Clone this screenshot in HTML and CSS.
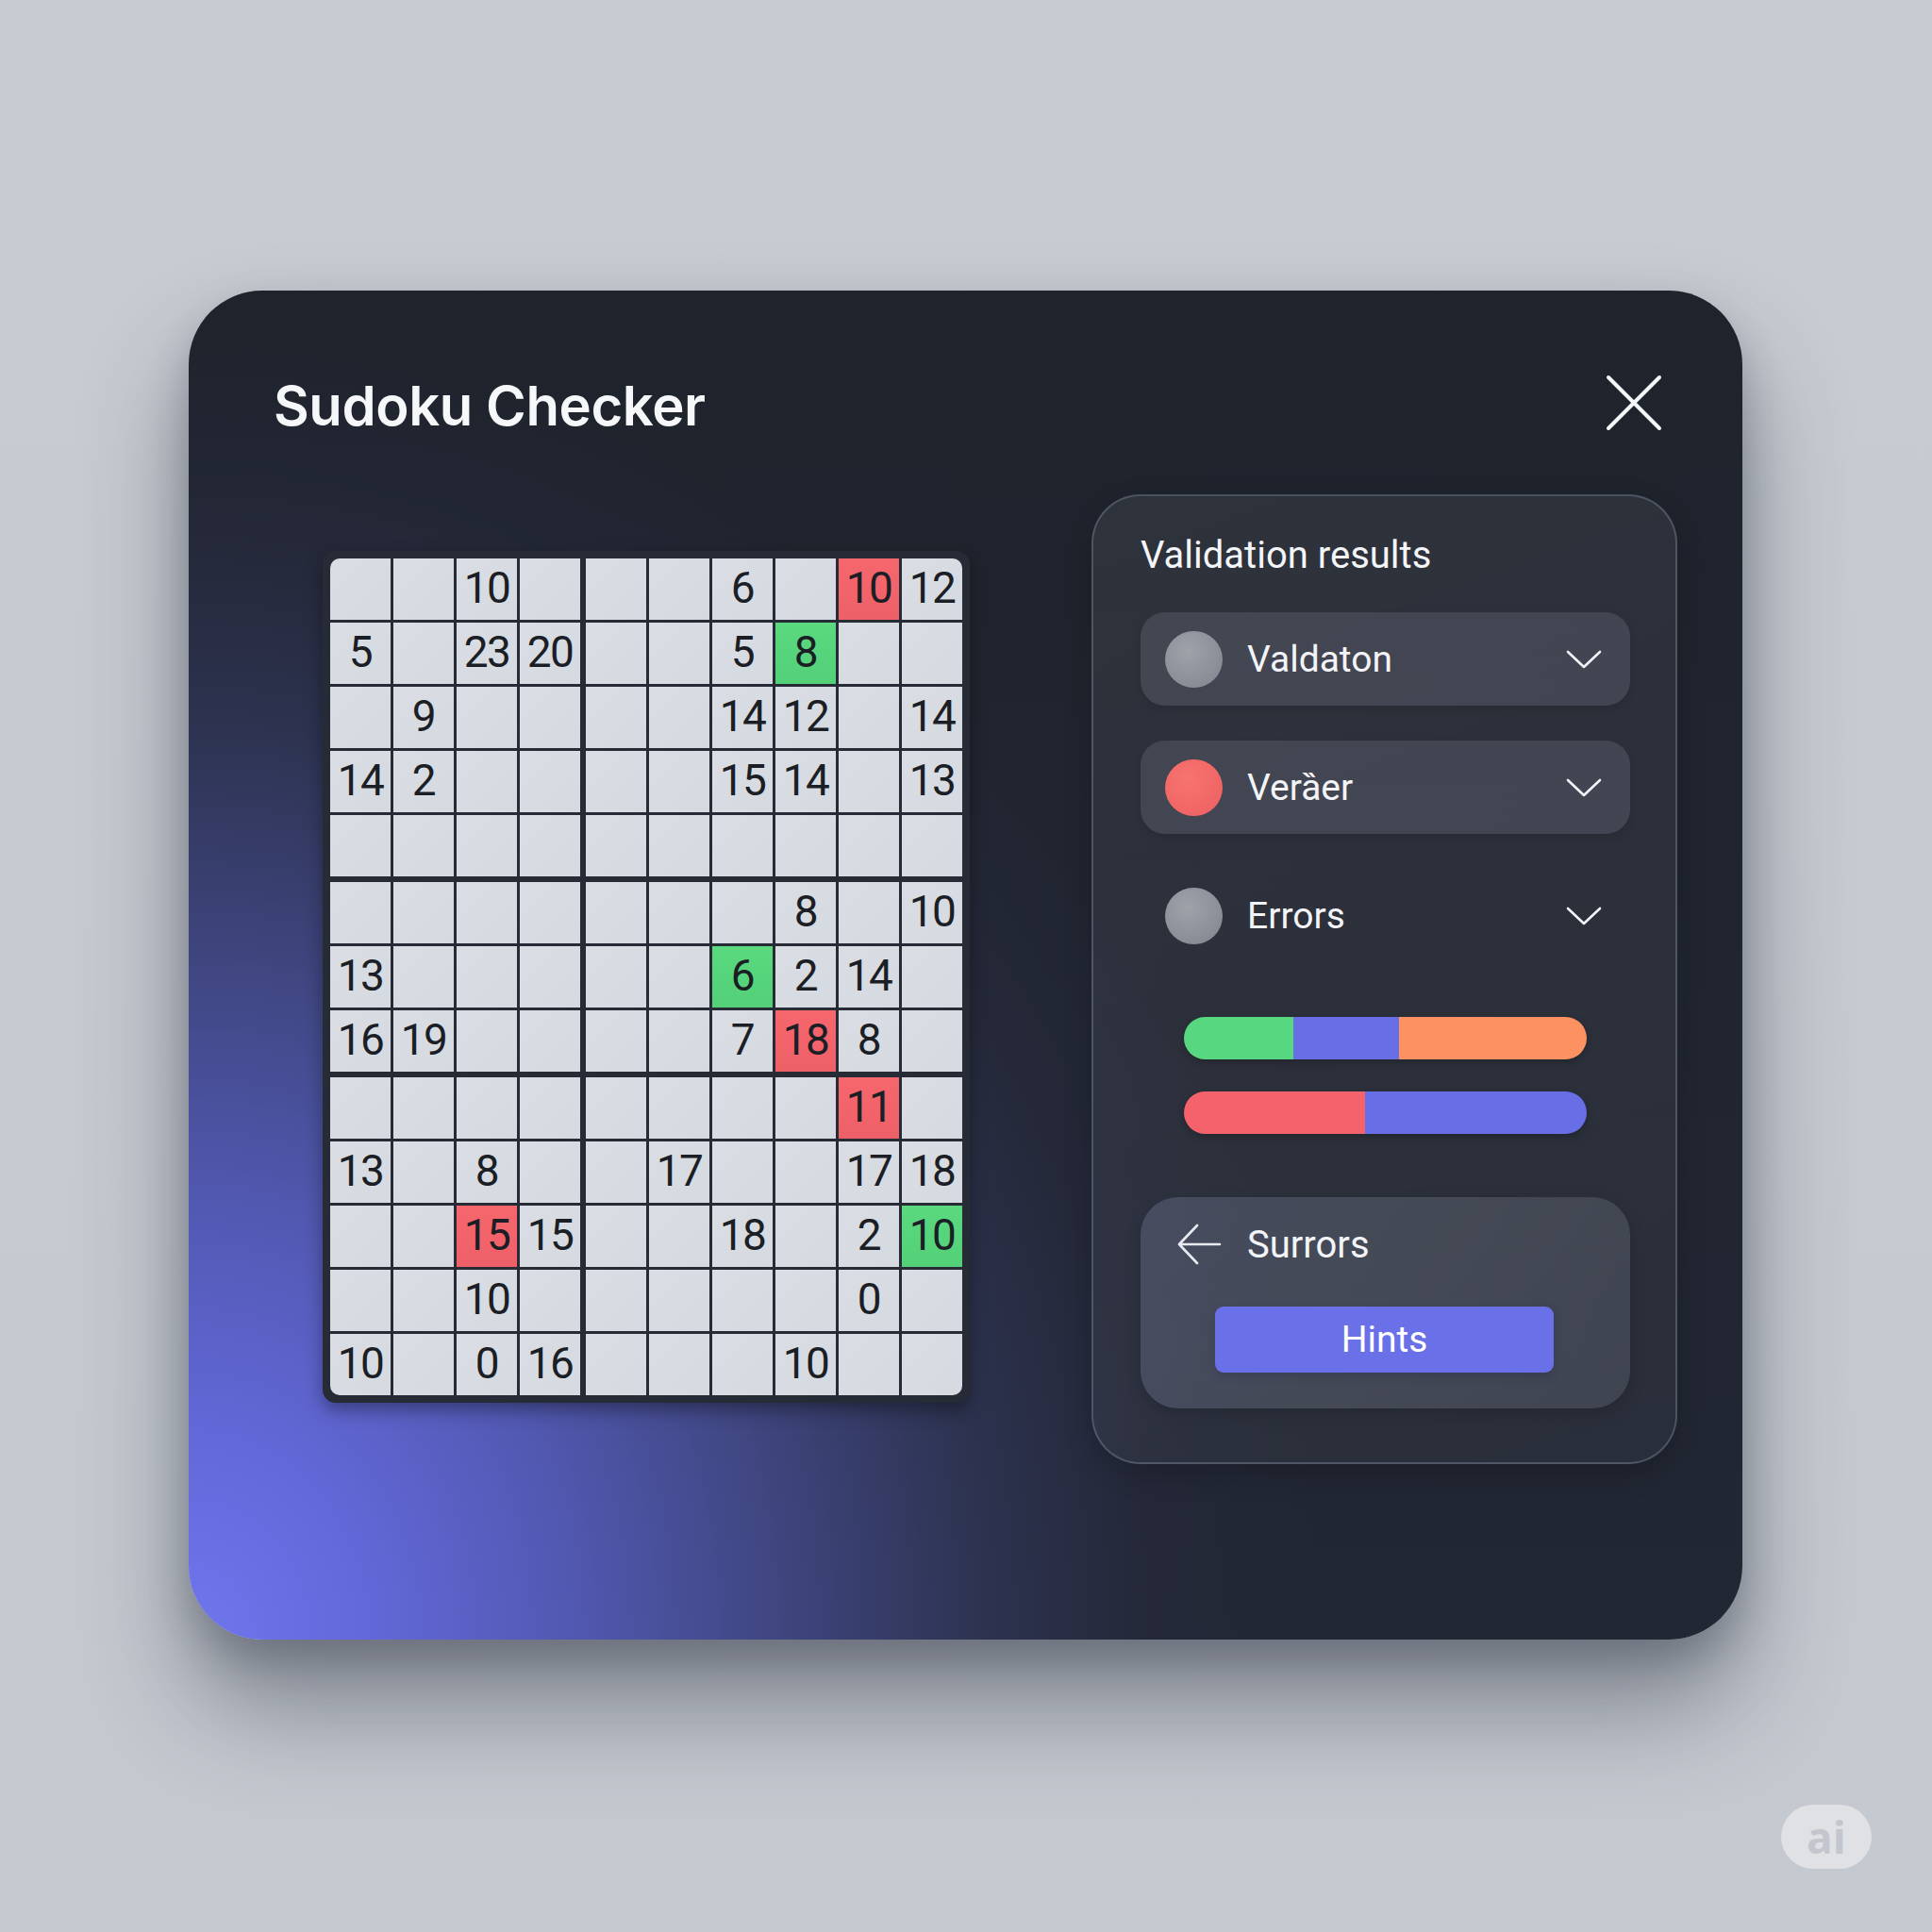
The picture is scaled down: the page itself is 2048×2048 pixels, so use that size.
FILE: index.html
```html
<!DOCTYPE html>
<html lang="en">
<head>
<meta charset="utf-8">
<title>Sudoku Checker</title>
<link rel="stylesheet" href="styles.css">
</head>
<body>
<div class="page">
  <section class="card">
    <header class="card-head">
      <h1 class="title">Sudoku Checker</h1>
      <button class="close" aria-label="Close">
        <svg viewBox="0 0 60 60" width="60" height="60"><path d="M3 3 L57 57 M57 3 L3 57" stroke="#f4f5f7" stroke-width="4" stroke-linecap="round" fill="none"/></svg>
      </button>
    </header>
    <div class="card-body">
      <div class="board">
        <div class="cells">
          <div class="cell"></div><div class="cell"></div><div class="cell">10</div><div class="cell"></div><div class="cell"></div><div class="cell"></div><div class="cell">6</div><div class="cell"></div><div class="cell bad">10</div><div class="cell">12</div>
          <div class="cell">5</div><div class="cell"></div><div class="cell">23</div><div class="cell">20</div><div class="cell"></div><div class="cell"></div><div class="cell">5</div><div class="cell good">8</div><div class="cell"></div><div class="cell"></div>
          <div class="cell"></div><div class="cell">9</div><div class="cell"></div><div class="cell"></div><div class="cell"></div><div class="cell"></div><div class="cell">14</div><div class="cell">12</div><div class="cell"></div><div class="cell">14</div>
          <div class="cell">14</div><div class="cell">2</div><div class="cell"></div><div class="cell"></div><div class="cell"></div><div class="cell"></div><div class="cell">15</div><div class="cell">14</div><div class="cell"></div><div class="cell">13</div>
          <div class="cell"></div><div class="cell"></div><div class="cell"></div><div class="cell"></div><div class="cell"></div><div class="cell"></div><div class="cell"></div><div class="cell"></div><div class="cell"></div><div class="cell"></div>
          <div class="cell"></div><div class="cell"></div><div class="cell"></div><div class="cell"></div><div class="cell"></div><div class="cell"></div><div class="cell"></div><div class="cell">8</div><div class="cell"></div><div class="cell">10</div>
          <div class="cell">13</div><div class="cell"></div><div class="cell"></div><div class="cell"></div><div class="cell"></div><div class="cell"></div><div class="cell good">6</div><div class="cell">2</div><div class="cell">14</div><div class="cell"></div>
          <div class="cell">16</div><div class="cell">19</div><div class="cell"></div><div class="cell"></div><div class="cell"></div><div class="cell"></div><div class="cell">7</div><div class="cell bad">18</div><div class="cell">8</div><div class="cell"></div>
          <div class="cell"></div><div class="cell"></div><div class="cell"></div><div class="cell"></div><div class="cell"></div><div class="cell"></div><div class="cell"></div><div class="cell"></div><div class="cell bad">11</div><div class="cell"></div>
          <div class="cell">13</div><div class="cell"></div><div class="cell">8</div><div class="cell"></div><div class="cell"></div><div class="cell">17</div><div class="cell"></div><div class="cell"></div><div class="cell">17</div><div class="cell">18</div>
          <div class="cell"></div><div class="cell"></div><div class="cell bad">15</div><div class="cell">15</div><div class="cell"></div><div class="cell"></div><div class="cell">18</div><div class="cell"></div><div class="cell">2</div><div class="cell good">10</div>
          <div class="cell"></div><div class="cell"></div><div class="cell">10</div><div class="cell"></div><div class="cell"></div><div class="cell"></div><div class="cell"></div><div class="cell"></div><div class="cell">0</div><div class="cell"></div>
          <div class="cell">10</div><div class="cell"></div><div class="cell">0</div><div class="cell">16</div><div class="cell"></div><div class="cell"></div><div class="cell"></div><div class="cell">10</div><div class="cell"></div><div class="cell"></div>
        </div>
      </div>

      <aside class="panel">
        <h2 class="panel-title">Validation results</h2>
        <div class="rows">
          <div class="row filled">
            <span class="dot grey"></span>
            <span class="row-label">Valdaton</span>
            <svg class="chev" viewBox="0 0 38 22" width="38" height="22"><path d="M2 3 L19 19 L36 3" stroke="#f2f3f6" stroke-width="2.6" fill="none" stroke-linecap="round" stroke-linejoin="round"/></svg>
          </div>
          <div class="row filled">
            <span class="dot red"></span>
            <span class="row-label">Verȁer</span>
            <svg class="chev" viewBox="0 0 38 22" width="38" height="22"><path d="M2 3 L19 19 L36 3" stroke="#f2f3f6" stroke-width="2.6" fill="none" stroke-linecap="round" stroke-linejoin="round"/></svg>
          </div>
          <div class="row">
            <span class="dot grey"></span>
            <span class="row-label">Errors</span>
            <svg class="chev" viewBox="0 0 38 22" width="38" height="22"><path d="M2 3 L19 19 L36 3" stroke="#f2f3f6" stroke-width="2.6" fill="none" stroke-linecap="round" stroke-linejoin="round"/></svg>
          </div>
        </div>

        <div class="bars">
          <div class="bar">
            <span class="seg green" style="width:27.2%"></span>
            <span class="seg blue" style="width:26.3%"></span>
            <span class="seg orange" style="width:46.5%"></span>
          </div>
          <div class="bar">
            <span class="seg red" style="width:45%"></span>
            <span class="seg blue" style="width:55%"></span>
          </div>
        </div>

        <div class="hint-box">
          <div class="back">
            <svg viewBox="0 0 48 48" width="48" height="48"><path d="M46 24 H3 M22 4 L3 24 L22 44" stroke="#e8eaef" stroke-width="2.6" fill="none" stroke-linecap="round" stroke-linejoin="round"/></svg>
            <span class="back-label">Surrors</span>
          </div>
          <button class="hints">Hints</button>
        </div>
      </aside>
    </div>
  </section>
  <div class="ai-badge">ai</div>
</div>
</body>
</html>
```

FILE: styles.css
```css
* { box-sizing: border-box; }

html, body {
  margin: 0;
  padding: 0;
  background: #c6cad1;
}

.page {
  position: relative;
  width: 2048px;
  height: 2048px;
  padding: 308px 0 0 200px;
  background: linear-gradient(180deg, #c8ccd2 0%, #c4c8cf 100%);
  font-family: Roboto, "Liberation Sans", sans-serif;
}

.card {
  width: 1647px;
  height: 1430px;
  border-radius: 78px;
  background:
    radial-gradient(ellipse 1200px 1380px at 0% 100%, #7077ee 0%, #6268d8 16%, #5158b0 34%, #3f4680 52%, #2d3350 70%, #242838 85%, rgba(31,35,45,0) 100%),
    linear-gradient(180deg, #1f232c 0%, #222734 100%);
  box-shadow: 0 70px 110px rgba(40, 46, 62, 0.45), 0 20px 40px rgba(40, 46, 62, 0.25);
  overflow: hidden;
}

.card-head {
  display: flex;
  justify-content: space-between;
  align-items: flex-start;
  padding: 89px 85px 0 90px;
  height: 216px;
}

.title {
  margin: 0;
  font-family: Inter, "Liberation Sans", sans-serif;
  font-weight: 600;
  font-size: 58px;
  line-height: 66px;
  letter-spacing: -0.4px;
  color: #f6f7f9;
}

.close {
  margin: 0;
  padding: 0;
  border: 0;
  background: none;
  width: 60px;
  height: 60px;
  display: flex;
}

.card-body {
  display: flex;
  align-items: flex-start;
  padding-left: 142px;
  gap: 129px;
}

/* ---------- board ---------- */
.board {
  margin-top: 60px;
  padding: 8px;
  background: #272b36;
  border-radius: 14px;
  box-shadow: 0 8px 18px rgba(0, 0, 0, 0.35);
}

.cells {
  display: grid;
  grid-template-columns: repeat(4, 64px) 67px repeat(5, 64px);
  grid-template-rows: repeat(5, 65px) 68px 65px 65px 68px repeat(4, 65px);
  gap: 3px;
  background: #272b36;
  border-radius: 10px;
  overflow: hidden;
}

.cell {
  display: flex;
  align-items: center;
  justify-content: center;
  background: linear-gradient(135deg, #dadde4 0%, #d5d9e0 100%);
  font-family: Roboto, "Liberation Sans", sans-serif;
  font-size: 46px;
  letter-spacing: -1.5px;
  color: #1b1e25;
  padding-bottom: 3px;
}

.cell:nth-child(10n+5) { margin-left: 3px; }
.cell:nth-child(n+51):nth-child(-n+60),
.cell:nth-child(n+81):nth-child(-n+90) { margin-top: 3px; }

.cell.bad { background: linear-gradient(180deg, #f6666d 0%, #ee6068 100%); }
.cell.good { background: linear-gradient(180deg, #5ad97f 0%, #53d078 100%); }

/* ---------- panel ---------- */
.panel {
  width: 621px;
  height: 1028px;
  padding: 30px 48px 0 50px;
  border: 2px solid rgba(120, 128, 148, 0.45);
  border-radius: 52px;
  background: linear-gradient(160deg, rgba(255,255,255,0.07) 0%, rgba(255,255,255,0.04) 100%);
  box-shadow: 0 10px 30px rgba(0,0,0,0.2);
  color: #f4f5f8;
}

.panel-title {
  margin: 0;
  font-weight: 400;
  font-size: 40px;
  line-height: 66px;
  color: #f4f5f8;
}

.rows {
  margin-top: 27px;
  display: flex;
  flex-direction: column;
  gap: 37px;
}

.row {
  display: flex;
  align-items: center;
  height: 99px;
  padding: 0 30px 0 26px;
  border-radius: 26px;
}

.row.filled {
  background: rgba(170, 178, 196, 0.17);
  box-shadow: 0 4px 10px rgba(0,0,0,0.12);
}

.dot {
  width: 61px;
  height: 60px;
  border-radius: 50%;
  flex: none;
}
.dot.grey { background: radial-gradient(circle at 40% 35%, #a0a2aa 0%, #8a8d96 70%, #80838c 100%); }
.dot.red { background: radial-gradient(circle at 40% 35%, #f77470 0%, #ef6464 75%, #e85c5e 100%); }

.row-label {
  margin-left: 26px;
  flex: 1;
  font-size: 39px;
  color: #f3f4f7;
}

.chev { flex: none; }

.bars {
  margin: 58px 46px 0 46px;
  display: flex;
  flex-direction: column;
  gap: 34px;
}

.bar {
  display: flex;
  height: 45px;
  border-radius: 23px;
  overflow: hidden;
  box-shadow: 0 3px 8px rgba(0,0,0,0.25);
}
.seg { display: block; height: 100%; }
.seg.green { background: #57d780; }
.seg.blue { background: #686ee6; }
.seg.orange { background: #fc9161; }
.seg.red { background: #f4636b; }

.hint-box {
  margin-top: 67px;
  width: 519px;
  height: 224px;
  padding: 26px 0 0 38px;
  border-radius: 40px;
  background: linear-gradient(120deg, rgba(150,160,200,0.24) 0%, rgba(170,176,192,0.2) 50%, rgba(170,176,192,0.17) 100%);
  box-shadow: 0 6px 16px rgba(0,0,0,0.15);
}

.back {
  display: flex;
  align-items: center;
  height: 48px;
}
.back svg { flex: none; }
.back-label {
  margin-left: 27px;
  font-size: 40px;
  color: #f3f4f7;
}

.hints {
  display: block;
  margin: 42px 0 0 41px;
  width: 359px;
  height: 70px;
  border: 0;
  border-radius: 9px;
  background: #6a70e8;
  font-family: Roboto, "Liberation Sans", sans-serif;
  font-size: 39px;
  color: #ffffff;
  box-shadow: 0 4px 10px rgba(30, 30, 80, 0.25);
}

/* ---------- watermark badge ---------- */
.ai-badge {
  position: absolute;
  left: 1888px;
  top: 1913px;
  width: 96px;
  height: 68px;
  border-radius: 34px;
  background: #dfe1e5;
  color: #c3c7cd;
  font-family: "Open Sans", "Liberation Sans", sans-serif;
  font-weight: 700;
  font-size: 46px;
  line-height: 68px;
  text-align: center;
}
```
